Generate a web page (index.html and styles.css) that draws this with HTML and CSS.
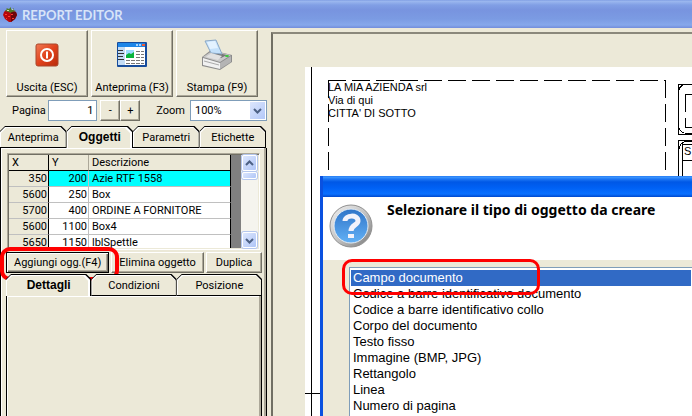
FILE: index.html
```html
<!DOCTYPE html>
<html lang="it">
<head>
    <meta charset="UTF-8">
    <meta name="viewport" content="width=device-width, initial-scale=1.0">
    <title>Report Editor</title>
    <link rel="stylesheet" href="styles.css">
</head>
<body>
    <header class="titlebar">
        <svg class="logo" width="16" height="16" viewBox="0 0 16 16">
            <path d="M2 5L4 3L7 4L10 3L14 5L15 8L13 12L9 15H7L3 12L1 8Z" fill="#b5080c"/>
            <path d="M9 4L14 5L15 8L13 12L9 15Z" fill="#6d0509"/>
            <path d="M3 7h2v1H3zM6 9h2v1H6zM4 11h1v1H4zM9 7h2v1H9zM10 11h2v1h-2z" fill="#ff3a30"/>
            <path d="M7 5L3 4L5 2L4 1L7 2L9 0V3L12 1L11 3L14 4L10 5L8 6Z" fill="#4f7a24"/>
            <path d="M5 3h2v1H5zM10 2h1v1h-1z" fill="#d5d9a0"/>
        </svg>
        <h1>REPORT EDITOR</h1>
    </header>
    <main class="workspace">
        <section class="sidebar">
            <div class="toolbar">
                <button class="tool">
                    <svg width="32" height="32" viewBox="0 0 32 32">
                        <defs>
                            <linearGradient id="red" x2="1" y2="1"><stop stop-color="#f07a55"/><stop offset=".5" stop-color="#e0421c"/><stop offset="1" stop-color="#b82b0c"/></linearGradient>
                        </defs>
                        <rect x="5" y="5" width="22" height="22" rx="2" fill="url(#red)" stroke="#a9472c"/>
                        <circle cx="16" cy="16" r="6" fill="none" stroke="#fff" stroke-width="2"/>
                        <path d="M16 12.500V19.500" stroke="#fff" stroke-width="2"/>
                    </svg>
                    <span>Uscita (ESC)</span>
                </button>
                <button class="tool">
                    <svg width="32" height="32" viewBox="0 0 32 32">
                        <rect x="1" y="3" width="30" height="25" rx="1" fill="#174c9c"/>
                        <rect x="2" y="4" width="27" height="4" fill="#1e86e8"/>
                        <path d="M20 5h2v2h-2zM23 5h2v2h-2z" fill="#a6d2ff"/>
                        <path d="M26 5h3v2h-3z" fill="#f05a35"/>
                        <rect x="2" y="8" width="27" height="18" fill="#fff"/>
                        <rect x="2" y="8" width="7" height="18" fill="#c3dcf5"/>
                        <path d="M2 11h5M2 14h6M2 17h5M2 20h6" stroke="#333" transform="translate(0 .5)"/>
                        <rect x="10" y="11" width="8" height="5" fill="#9edcff"/>
                        <path d="M10 19V16L13 14L15 15L18 13V19Z" fill="#0ab43c"/>
                        <path d="M20 12.500h8M20 15.500h8M20 18.500h8M10 21.500h18M10 24.500h18" stroke="#777" stroke-dasharray="4 1"/>
                    </svg>
                    <span>Anteprima (F3)</span>
                </button>
                <button class="tool">
                    <svg width="32" height="32" viewBox="0 0 32 32">
                        <path d="M1 18L10 11L31 16V23L19 31L1 27Z" fill="#8c8c8c"/>
                        <path d="M2 18L11 12L30 16L19 23Z" fill="#c9c9c9"/>
                        <path d="M8 16L12 13L26 16L20 19Z" fill="#777"/>
                        <path d="M4 2L15 1L21 15L10 14Z" fill="#c4e1fb" stroke="#8ba8c6"/>
                        <path d="M6 3L14 2L17 9L9 10Z" fill="#e3f2ff"/>
                        <path d="M2 19L19 24V30L2 26Z" fill="#f1f1f1"/>
                        <path d="M19 24L30 17V23L19 30Z" fill="#b4b4b4"/>
                        <path d="M3 22L18 26" stroke="#aaa"/>
                        <path d="M5 18L10 14L21 17L17 21Z" fill="#e1e1e1"/>
                        <ellipse cx="26" cy="17" rx="2" ry="1" fill="#35c635"/>
                    </svg>
                    <span>Stampa (F9)</span>
                </button>
            </div>
            <div class="page-row">
                <label for="pagina">Pagina</label>
                <input id="pagina" type="text" value="1">
                <button class="step">-</button>
                <button class="step">+</button>
                <label class="zoom-label" for="zoom">Zoom</label>
                <span class="combo">
                    <select id="zoom"><option>100%</option></select>
                    <svg class="arrow" width="15" height="17" viewBox="0 0 15 17"><path d="M4 7L7.500 10.500L11 7" fill="none" stroke="#4d6185" stroke-width="2"/></svg>
                </span>
            </div>
            <nav class="tabs">
                <button class="tab">Anteprima</button>
                <button class="tab active">Oggetti</button>
                <button class="tab">Parametri</button>
                <button class="tab">Etichette</button>
            </nav>
            <div class="panel">
                <div class="grid-box">
                    <div class="grid-area">
                        <table class="grid">
                            <thead>
                                <tr><th class="num">X</th><th class="num">Y</th><th>Descrizione</th></tr>
                            </thead>
                            <tbody>
                                <tr class="current"><td>350</td><td>200</td><td>Azie RTF 1558</td></tr>
                                <tr><td>5600</td><td>250</td><td>Box</td></tr>
                                <tr><td>5700</td><td>400</td><td>ORDINE A FORNITORE</td></tr>
                                <tr><td>5600</td><td>1100</td><td>Box4</td></tr>
                                <tr><td>5650</td><td>1150</td><td>lblSpettle</td></tr>
                            </tbody>
                        </table>
                    </div>
                    <div class="scrollbar">
                        <button class="scroll-btn" aria-label="Su"><svg width="13" height="13" viewBox="0 0 13 13"><path d="M3 8L6.500 4.500L10 8" fill="none" stroke="#4d6185" stroke-width="2"/></svg></button>
                        <div class="thumb"></div>
                        <button class="scroll-btn last" aria-label="Giù"><svg width="13" height="13" viewBox="0 0 13 13"><path d="M3 5L6.500 8.500L10 5" fill="none" stroke="#4d6185" stroke-width="2"/></svg></button>
                    </div>
                </div>
                <div class="actions">
                    <button class="action default">Aggiungi ogg.(F4)</button>
                    <button class="action">Elimina oggetto</button>
                    <button class="action">Duplica</button>
                    <span class="mark mark-add"></span>
                </div>
                <nav class="tabs subtabs">
                    <button class="tab active">Dettagli</button>
                    <button class="tab">Condizioni</button>
                    <button class="tab">Posizione</button>
                </nav>
                <div class="details"></div>
            </div>
        </section>
        <section class="preview">
            <div class="paper">
                <svg class="drawing" width="387" height="349" shape-rendering="crispEdges">
                    <g fill="none" stroke="#000">
                        <path d="M6.500 0V349M0 326.500H16"/>
                        <path d="M23 13.500H361M23.500 13V109M360.500 13V109" stroke-dasharray="18 6"/>
                        <path d="M387 17.500H373.500V67.500H387M387 73.500H373.500V120"/>
                        <path d="M387 17.500H380Q374.500 18 373.500 25V59Q374.500 66 382 66.500H387M387 74.500H382Q374.500 75 374.500 82"/>
                        <path d="M387 27.500H380.500V45M380.500 51V60.500H387M387 77.500H377.500V120M377 93.500H387"/>
                    </g>
                </svg>
                <p class="company">LA MIA AZIENDA srl<br>Via di qui<br>CITTA' DI SOTTO</p>
                <span class="cut-label">S</span>
            </div>
        </section>
    </main>
    <section class="dialog" role="dialog" aria-labelledby="tipo-label">
        <div class="dialog-bar"></div>
        <div class="dialog-head">
            <svg width="44" height="44" viewBox="0 0 44 44">
                <defs>
                    <linearGradient id="ring" x2="1" y2="1"><stop stop-color="#f1f1f1"/><stop offset=".5" stop-color="#c4c4c4"/><stop offset="1" stop-color="#777"/></linearGradient>
                    <linearGradient id="blue" x2="0" y2="1"><stop stop-color="#2f74c8"/><stop offset="1" stop-color="#62b1f6"/></linearGradient>
                </defs>
                <circle cx="22" cy="22" r="21" fill="url(#ring)" stroke="#909090"/>
                <circle cx="22" cy="22" r="17" fill="url(#blue)" stroke="#e5edf5"/>
                <path d="M16 17C16 11 29 10 29 17C29 21 22 21 22 27" fill="none" stroke="#f2f2fb" stroke-width="5"/>
                <path d="M19 30h6v4h-6z" fill="#f2f2fb"/>
            </svg>
            <label id="tipo-label" for="tipo">Selezionare il tipo di oggetto da creare</label>
        </div>
        <div class="dialog-body">
            <select id="tipo" class="type-list" size="10">
                <option selected>Campo documento</option>
                <option>Codice a barre identificativo documento</option>
                <option>Codice a barre identificativo collo</option>
                <option>Corpo del documento</option>
                <option>Testo fisso</option>
                <option>Immagine (BMP, JPG)</option>
                <option>Rettangolo</option>
                <option>Linea</option>
                <option>Numero di pagina</option>
            </select>
            <span class="mark mark-field"></span>
        </div>
    </section>
</body>
</html>
```

FILE: styles.css
```css
* {
    box-sizing: border-box;
}
body {
    margin: 0;
    height: 100vh;
    overflow: hidden;
    display: flex;
    flex-direction: column;
    position: relative;
    background: #ece9d8;
    color: #000;
    font-family: Roboto, "Liberation Sans", sans-serif;
    font-size: 11px;
}
button, input, select {
    font: inherit;
    color: inherit;
    margin: 0;
    padding: 0;
    border-radius: 0;
}

/* title bar */
.titlebar {
    flex: none;
    height: 28px;
    display: flex;
    align-items: center;
    gap: 4px;
    padding: 2px 2px 0;
    background: linear-gradient(#7796e0 0, #9db9ef 1px, #819fe5 5px, #7894df 10px, #7b9be3 19px, #86a8eb 25px, #728ddb 28px);
}
.titlebar h1 {
    margin: 0;
    font-family: Lato, sans-serif;
    font-size: 13px;
    font-weight: bold;
    color: #d8e4f8;
}
.workspace {
    flex: 1;
    min-height: 0;
    display: flex;
    gap: 3px;
}
.sidebar {
    flex: none;
    width: 268px;
    display: flex;
    flex-direction: column;
}

/* raised buttons */
.tool, .step, .action {
    background: #ece9d8;
    border: 1px solid;
    border-color: #fff #716f64 #716f64 #fff;
    box-shadow: inset -1px -1px #aca899;
    white-space: nowrap;
}
.toolbar {
    display: flex;
    gap: 3px;
    padding: 2px 10px 0 6px;
}
.tool {
    flex: 1;
    height: 67px;
    display: flex;
    flex-direction: column;
    align-items: center;
    justify-content: space-between;
    padding: 8px 0 2px;
}
.page-row {
    display: flex;
    align-items: center;
    height: 21px;
    margin: 3px 1px 5px 12px;
}
.page-row input {
    width: 49px;
    height: 21px;
    margin: 0 3px 0 auto;
    padding-right: 3px;
    text-align: right;
    border: 1px solid #7f9db9;
}
.step {
    width: 20px;
    height: 21px;
}
.zoom-label {
    margin: 0 5px 0 16px;
}
.combo {
    position: relative;
}
.combo select {
    appearance: none;
    display: block;
    width: 77px;
    height: 21px;
    padding-left: 4px;
    background: #fff;
    border: 1px solid #7f9db9;
}
.arrow {
    position: absolute;
    top: 2px;
    right: 2px;
    background: linear-gradient(135deg, #dce6fd, #b3c8f8);
    pointer-events: none;
}
.page-row, .tool {
    font-size: 11px;
}

/* tabs with cut corners */
.tabs {
    display: flex;
    height: 22px;
    margin-right: 2px;
}
.tab {
    flex: 1 1 66px;
    position: relative;
    z-index: 0;
    border: 0;
    padding: 0;
    background: #000;
    clip-path: polygon(0 5px, 5px 0, calc(100% - 5px) 0, 100% 5px, 100% 100%, 0 100%);
}
.tab::before, .tab::after {
    content: "";
    position: absolute;
    z-index: -1;
    inset: 1px 1px 1px 0;
    background: #fff;
    clip-path: polygon(0 5px, 5px 0, calc(100% - 5px) 0, 100% 5px, 100% 100%, 0 100%);
}
.tab::after {
    inset: 2px 1px 1px;
    background: #ece9d8;
}
.tab.active {
    font-family: "Liberation Sans", Arial, sans-serif;
    font-size: 12px;
    font-weight: bold;
}
.tab.active::before {
    inset: 1px 1px 0 0;
}
.tab.active::after {
    inset: 2px 3px 0 1px;
}
.panel {
    flex: 1;
    display: flex;
    flex-direction: column;
    margin-right: 1px;
    padding: 5px 4px 0 6px;
    border-left: 1px solid #000;
    border-right: 1px solid #000;
    box-shadow: inset -2px 0 #aca899, inset 0 1px #fff, inset 1px 0 #fff;
}

/* objects grid */
.grid-box {
    display: flex;
    height: 97px;
    margin-right: 2px;
    border: 1px solid;
    border-color: #aca899 #fff #fff #aca899;
    box-shadow: inset 1px 1px #716f64;
    padding: 1px;
}
.grid-area {
    flex: 1;
    overflow: hidden;
    background: #808080;
}
.grid {
    width: 222px;
    table-layout: fixed;
    border-collapse: separate;
    border-spacing: 0;
    background: #fff;
}
.grid th, .grid td {
    height: 16px;
    padding: 1px 2px 0 3px;
    line-height: 14px;
    font-weight: normal;
    text-align: left;
    white-space: nowrap;
    border-right: 1px solid #c0c0c0;
    border-bottom: 1px solid #c0c0c0;
}
.grid th {
    background: #ece9d8;
    border-color: #000;
    border-right-color: #aca899;
}
.grid .num {
    width: 40px;
}
.grid td:nth-child(-n+2) {
    text-align: right;
    padding: 1px 1px 0;
}
.grid td:first-child {
    background: #ece9d8;
    border-right-color: #000;
}
.grid th:first-child, .grid tr > :last-child {
    border-right-color: #000;
}
.current td {
    background: #0ff;
}
.scrollbar {
    width: 17px;
    display: flex;
    flex-direction: column;
    gap: 1px;
    padding: 0 1px;
    background: #f5f4ee;
}
.scroll-btn, .thumb {
    height: 16px;
    border: 1px solid #fff;
    border-radius: 2px;
    background: linear-gradient(135deg, #dce6fd, #b0c6f7);
    box-shadow: 0 0 0 1px #b5c7ee;
}
.thumb {
    height: 7px;
}
.scroll-btn svg {
    display: block;
}
.last {
    margin-top: auto;
}
.actions {
    position: relative;
    display: flex;
    gap: 2px;
    margin: 2px 0 1px -1px;
}
.action {
    flex: 92 1 0;
    height: 21px;
}
.action.default {
    flex-grow: 103;
    border-color: #000;
    box-shadow: inset 1px 1px #fff, inset -1px -1px #716f64, inset -2px -2px #aca899;
}
.action:nth-child(3) {
    flex-grow: 55;
}
.subtabs {
    flex: none;
    margin: 0 0 0 -1px;
}
.details {
    flex: 1;
    margin-left: -1px;
    border-left: 1px solid #000;
    border-right: 1px solid #000;
    box-shadow: inset -2px 0 #aca899, inset 1px 0 #fff, inset 0 1px #fff;
}

/* hand-drawn highlights */
.mark {
    position: absolute;
    border: 4px solid #f00;
    border-radius: 10px;
    pointer-events: none;
}
.mark-add {
    left: -6px;
    top: -5px;
    width: 119px;
    height: 34px;
}
.mark-field {
    left: 19px;
    top: -1px;
    width: 198px;
    height: 36px;
    border-width: 3px;
}

/* report preview */
.preview {
    flex: 1;
    min-width: 0;
    margin-top: 4px;
    padding: 33px 0 0 32px;
    border: solid #716f64;
    border-width: 2px 0 0 2px;
    border-top-color: #8b887b;
}
.paper {
    position: relative;
    height: 100%;
    overflow: hidden;
    background: #fff;
    font-family: "Liberation Sans", Arial, sans-serif;
}
.drawing {
    display: block;
}
.company {
    position: absolute;
    left: 23px;
    top: 14px;
    margin: 0;
    line-height: 13px;
}
.cut-label {
    position: absolute;
    left: 379px;
    top: 78px;
}

/* object type dialog */
.dialog {
    position: absolute;
    left: 320px;
    top: 176px;
    right: 0;
    bottom: 0;
    display: flex;
    flex-direction: column;
    overflow: hidden;
    background: #ece9d8;
    border-left: 3px solid #0a51e0;
}
.dialog-bar {
    flex: none;
    height: 21px;
    margin-left: -3px;
    background: linear-gradient(#1b6ff0 0, #3f99ff 1px, #1f78f5 3px, #0058e6 6px, #0061f5 12px, #0a70ff 18px, #0048cc 21px);
}
.dialog-head {
    flex: none;
    display: flex;
    gap: 14px;
    height: 63px;
    padding: 7px 6px;
    background: #fff;
}
.dialog-head label {
    margin-top: -4px;
    font-family: "Noto Sans", sans-serif;
    font-size: 14px;
    font-weight: bold;
    white-space: nowrap;
}
.dialog-body {
    position: relative;
    flex: 1;
    padding: 7px 0 0 26px;
}
.type-list {
    display: block;
    width: 100%;
    height: 200px;
    padding: 2px 1px;
    overflow: hidden;
    border: 1px solid #7f9db9;
    border-right: 0;
    background: #fff;
    font-family: "Liberation Sans", Arial, sans-serif;
    font-size: 13px;
    outline: none;
}
.type-list option {
    height: 16px;
    min-height: 16px;
    padding: 0 2px;
    line-height: 16px;
}
.type-list option:checked {
    background: linear-gradient(#316ac5, #316ac5);
    -webkit-text-fill-color: #fff;
}
```
